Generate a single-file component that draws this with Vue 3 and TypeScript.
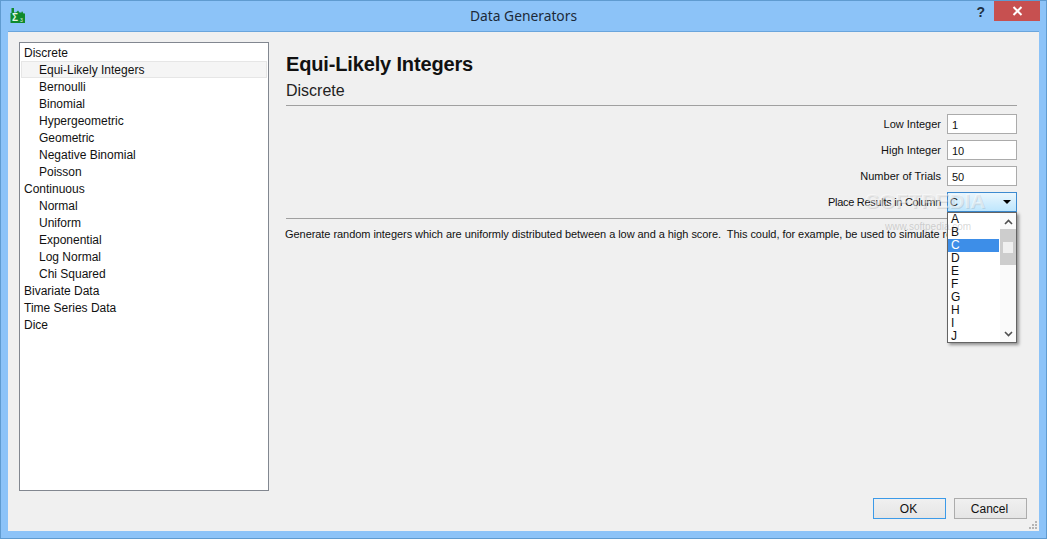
<script setup lang="ts">
interface Row { label: string; indent: boolean; active?: boolean }
const rows: Row[] = [
  { label: 'Discrete', indent: false },
  { label: 'Equi-Likely Integers', indent: true, active: true },
  { label: 'Bernoulli', indent: true },
  { label: 'Binomial', indent: true },
  { label: 'Hypergeometric', indent: true },
  { label: 'Geometric', indent: true },
  { label: 'Negative Binomial', indent: true },
  { label: 'Poisson', indent: true },
  { label: 'Continuous', indent: false },
  { label: 'Normal', indent: true },
  { label: 'Uniform', indent: true },
  { label: 'Exponential', indent: true },
  { label: 'Log Normal', indent: true },
  { label: 'Chi Squared', indent: true },
  { label: 'Bivariate Data', indent: false },
  { label: 'Time Series Data', indent: false },
  { label: 'Dice', indent: false },
]
const fields = [
  { label: 'Low Integer', value: '1' },
  { label: 'High Integer', value: '10' },
  { label: 'Number of Trials', value: '50' },
]
const columns = ['A', 'B', 'C', 'D', 'E', 'F', 'G', 'H', 'I', 'J']
</script>

<template>
  <div class="window">
    <header class="titlebar">
      <svg class="appicon" width="16" height="17" viewBox="0 0 16 17">
        <path d="M0.500 16V6h1V1h2.500v4.500h2L8 3.500l1.500 2h2L12 4l1.500 2.500H15V16z" fill="#0f8a2c" />
        <text x="2" y="14" font-size="10" font-weight="700" fill="#e4f7e0" font-family="Liberation Sans, sans-serif">Σ</text>
        <text x="10" y="15" font-size="5" fill="#e4f7e0" font-family="Liberation Sans, sans-serif">3</text>
      </svg>
      <div class="title">Data Generators</div>
      <span class="help">?</span>
      <div class="close">
        <svg width="11" height="10" viewBox="0 0 11 10"><path d="M1.500 1l8 8M9.500 1l-8 8" stroke="#fff" stroke-width="2" fill="none" /></svg>
      </div>
    </header>

    <main class="client">
      <div class="columns">
        <nav class="tree">
          <div v-for="r in rows" :key="r.label" class="row" :class="{ indent: r.indent, active: r.active }">{{ r.label }}</div>
        </nav>

        <section class="panel">
          <h1>Equi-Likely Integers</h1>
          <h2>Discrete</h2>
          <div class="form">
            <div v-for="f in fields" :key="f.label" class="field">
              <label>{{ f.label }}</label>
              <div class="input">{{ f.value }}</div>
            </div>
            <div class="field">
              <label class="tight">Place Results in Column</label>
              <div class="combo">
                <span>C</span>
                <i class="caret"></i>
                <div class="popup">
                  <ul>
                    <li v-for="c in columns" :key="c" :class="{ sel: c === 'C' }">{{ c }}</li>
                  </ul>
                  <div class="scroll">
                    <svg width="9" height="6" viewBox="0 0 9 6"><path d="M1 5l3.500-3.500L8 5" stroke="#505050" stroke-width="1.600" fill="none" /></svg>
                    <div class="thumb"><b></b></div>
                    <svg class="down" width="9" height="6" viewBox="0 0 9 6"><path d="M1 1l3.500 3.500L8 1" stroke="#505050" stroke-width="1.600" fill="none" /></svg>
                  </div>
                </div>
              </div>
            </div>
          </div>
          <p class="desc">Generate random integers which are uniformly distributed between a low and a high score.&nbsp; This could, for example, be used to simulate rolling a die.</p>
          <div class="mark">SOFTPEDIA</div>
          <div class="mark-url">www.softpedia.com</div>
        </section>
      </div>
      <footer class="actions">
        <button class="primary">OK</button>
        <button>Cancel</button>
      </footer>
      <svg class="grip" width="9" height="9" viewBox="0 0 9 9" fill="#b4b4b4">
        <rect x="6" y="0" width="2" height="2" /><rect x="3" y="3" width="2" height="2" /><rect x="6" y="3" width="2" height="2" />
        <rect x="0" y="6" width="2" height="2" /><rect x="3" y="6" width="2" height="2" /><rect x="6" y="6" width="2" height="2" />
      </svg>
    </main>
  </div>
</template>

<style>
html, body { margin: 0; overflow: hidden; }
</style>

<style scoped>
.window {
  box-sizing: border-box;
  width: 1047px;
  height: 539px;
  background: #8cc3f8;
  border: 1px solid #5f9bd0;
  display: flex;
  flex-direction: column;
  padding: 0 7px 7px;
  font-family: "Liberation Sans", sans-serif;
  font-size: 11px;
  color: #111;
}
.titlebar {
  height: 30px;
  flex: none;
  display: flex;
  position: relative;
  align-items: flex-start;
}
.appicon { margin: 6px 0 0 2px; }
.title {
  position: absolute;
  left: 0;
  right: 0;
  top: 5px;
  text-align: center;
  font: 13.800px/20px "Noto Sans", sans-serif;
  color: #1c2a38;
}
.help {
  position: absolute;
  right: 54px;
  top: 2px;
  font: 700 14px/18px "Liberation Sans", sans-serif;
  color: #1f3144;
}
.close {
  position: absolute;
  right: -1px;
  top: 0;
  width: 46px;
  height: 20px;
  background: #c75050;
  display: flex;
  align-items: center;
  justify-content: center;
}
.client {
  flex: 1;
  min-height: 0;
  background: #f0f0f0;
  border: 1px solid #6aa5dc;
  border-width: 1px 0 0 0;
  box-sizing: border-box;
  padding: 10px 12px 12px 11px;
  position: relative;
  display: flex;
  flex-direction: column;
}
.columns {
  flex: 1;
  min-height: 0;
  display: flex;
  gap: 17px;
}
.tree {
  box-sizing: border-box;
  width: 250px;
  height: 449px;
  flex: none;
  background: #fff;
  border: 1px solid #828790;
  padding: 1px 1px;
  font-size: 12px;
}
.row {
  box-sizing: border-box;
  height: 17px;
  line-height: 17px;
  padding: 1px 0 0 3px;
  white-space: nowrap;
  color: #111;
}
.row.indent { padding-left: 18px; }
.row.active {
  background: #f5f5f5;
  box-shadow: inset 0 0 0 1px #e6e6e6;
}
.panel {
  flex: 1;
  min-width: 0;
  position: relative;
  padding-top: 11px;
  margin-right: 10px;
}
h1 {
  margin: 0;
  font: 700 20px/23px "Liberation Sans", sans-serif;
  letter-spacing: -0.150px;
  color: #111;
}
h2 {
  margin: 5px 0 0;
  font: 400 16px/20px "Liberation Sans", sans-serif;
  color: #222;
  padding-bottom: 4px;
  border-bottom: 1px solid #a0a0a0;
}
.form {
  display: flex;
  flex-direction: column;
  gap: 6px;
  padding: 8px 0 6px;
  border-bottom: 1px solid #a0a0a0;
}
.field {
  display: flex;
  justify-content: flex-end;
  align-items: center;
  gap: 6px;
  height: 20px;
}
.tight { letter-spacing: -0.300px; }
.input, .combo {
  box-sizing: border-box;
  width: 70px;
  height: 20px;
  border: 1px solid #ababab;
  background: #fff;
  line-height: 20px;
  padding-left: 4px;
}
.combo {
  position: relative;
  border-color: #3c8ad0;
  background: linear-gradient(#eaf6fd, #bee6fd);
  line-height: 18px;
  padding-left: 2px;
}
.caret {
  position: absolute;
  right: 5px;
  top: 7px;
  border: 4px solid transparent;
  border-top: 4px solid #000;
  border-bottom: 0;
  border-left-width: 4.500px;
  border-right-width: 4.500px;
}
.popup {
  position: absolute;
  left: -1px;
  top: 19px;
  box-sizing: border-box;
  width: 70px;
  height: 131px;
  background: #fff;
  border: 1px solid #646464;
  box-shadow: 2px 2px 3px rgba(0, 0, 0, 0.4);
  display: flex;
  z-index: 2;
  font-size: 12px;
}
ul {
  list-style: none;
  margin: 0;
  padding: 0;
  flex: 1;
}
li {
  height: 13px;
  line-height: 13px;
  padding-left: 3px;
  margin-right: 1px;
}
li.sel {
  background: #3d8ee8;
  color: #fff;
}
.scroll {
  width: 16px;
  flex: none;
  display: flex;
  flex-direction: column;
  align-items: center;
  background: #fafafa;
  padding-top: 6px;
}
.thumb {
  width: 16px;
  height: 36px;
  margin-top: 4px;
  background: #cdcdcd;
  display: flex;
  align-items: center;
  justify-content: center;
}
.thumb b {
  width: 10px;
  height: 11px;
  background: #f0f0f0;
}
.down { margin-top: 66px; }
.desc {
  margin: 8px 0 0 -1px;
  line-height: 14px;
  white-space: nowrap;
  overflow: hidden;
  letter-spacing: -0.055px;
}
.mark {
  position: absolute;
  left: 579px;
  top: 147px;
  font: 700 21px/24px "Liberation Sans", sans-serif;
  color: rgba(255, 255, 255, 0.45);
  text-shadow: 1px 1px 0 rgba(120, 120, 120, 0.2);
  z-index: 3;
  pointer-events: none;
}
.mark-url {
  position: absolute;
  left: 599px;
  top: 178px;
  font: 10px/14px "Liberation Sans", sans-serif;
  color: rgba(120, 120, 120, 0.3);
  z-index: 3;
}
.actions {
  flex: none;
  display: flex;
  justify-content: flex-end;
  gap: 8px;
  font-size: 12px;
}
button {
  box-sizing: border-box;
  width: 73px;
  height: 21px;
  border: 1px solid #acacac;
  background: linear-gradient(#f0f0f0, #e5e5e5);
  font: inherit;
  color: #111;
  padding: 0 2px 0 0;
}
button.primary { border-color: #3c9ae8; }
.grip {
  position: absolute;
  right: 1px;
  bottom: 1px;
}
</style>
